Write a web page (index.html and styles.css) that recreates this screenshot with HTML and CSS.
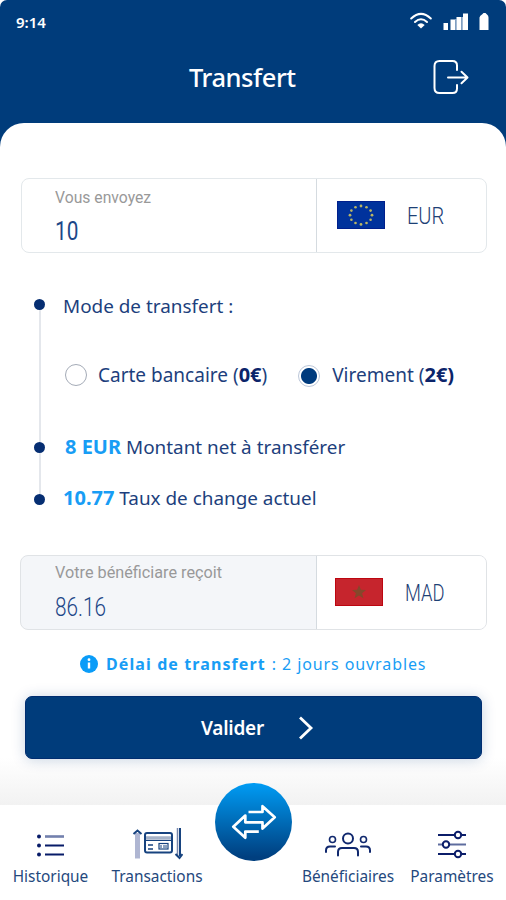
FILE: index.html
```html
<!DOCTYPE html>
<html lang="fr">
<head>
<meta charset="utf-8">
<title>Transfert</title>
<link rel="stylesheet" href="styles.css">
</head>
<body>
<div class="app">
  <header class="header">
    <div class="status">
      <span class="time">9:14</span>
      <svg class="status-icons" width="84" height="22" viewBox="0 0 84 22">
        <g fill="none" stroke="#fff" stroke-width="2" stroke-linecap="round">
          <path d="M2.200 8.500Q12 -.8 21.800 8.500"/><path d="M6 12Q12 6.400 18 12"/>
        </g>
        <path d="M8.300 15Q12 11.500 15.700 15L12 18.600Z" fill="#fff"/>
        <g fill="#fff"><path d="M34.500 13h4.500v7h-4.500zM41.500 9.500h4.500v10.500h-4.500zM47.500 7h4.800v13h-4.800zM54 3.500h5v16.500h-5z"/><path d="M73 4.500l1.500-1.500h2L78 4.500q1.500 1 1.500 3V20h-9V7.500q.5-2 2.500-3z"/></g>
        <path d="M47 9v11M53.200 7v13" stroke="#b5c8de" stroke-width="1.400"/>
      </svg>
    </div>
    <div class="titlebar">
      <h1>Transfert</h1>
      <svg class="logout" width="38" height="38" viewBox="0 0 38 38" fill="none" stroke="#fff" stroke-width="2" stroke-linecap="round" stroke-linejoin="round">
        <path d="M25 12V7.500Q25 3 20.500 3H7.500Q2.500 3 2.500 8v22q0 5 5 5h13Q25 35 25 30.500V27M16 19.500h19M29.500 13.800l6 5.700-6 5.700"/>
      </svg>
    </div>
  </header>
  <main class="sheet">
    <section class="field">
      <div class="amount"><span class="label label-send">Vous envoyez</span><span class="value">10</span></div>
      <div class="currency">
        <svg class="flag" width="48" height="28" viewBox="0 0 48 28">
          <rect width="48" height="28" fill="#00329c"/><rect x=".5" y=".5" width="47" height="27" fill="none" stroke="#001f8c"/>
          <g fill="#b9b565"><circle cx="24" cy="5" r="1.400"/><circle cx="29.500" cy="6.200" r="1.300"/><circle cx="33.600" cy="9.600" r="1.300"/><circle cx="35" cy="14.200" r="1.400"/><circle cx="33.600" cy="18.800" r="1.300"/><circle cx="29.500" cy="22" r="1.300"/><circle cx="24" cy="23.400" r="1.400"/><circle cx="18.500" cy="22" r="1.300"/><circle cx="14.400" cy="18.800" r="1.300"/><circle cx="13" cy="14.200" r="1.400"/><circle cx="14.400" cy="9.600" r="1.300"/><circle cx="18.500" cy="6.200" r="1.300"/></g>
        </svg>
        <span class="code">EUR</span>
      </div>
    </section>
    <ul class="steps">
      <li class="step step-mode"><i class="dot"></i><span>Mode de transfert :</span></li>
      <li class="modes">
        <label class="mode"><i class="radio"></i><span>Carte bancaire (<b>0€</b>)</span></label>
        <label class="mode mode-on"><i class="radio"></i><span>Virement (<b>2€)</b></span></label>
      </li>
      <li class="step step-net"><i class="dot"></i><span><b class="accent">8 EUR</b> Montant net à transférer</span></li>
      <li class="step step-rate"><i class="dot"></i><span><b class="accent">10.77</b> Taux de change actuel</span></li>
    </ul>
    <section class="field field-receive">
      <div class="amount"><span class="label label-receive">Votre bénéficiare reçoit</span><span class="value">86.16</span></div>
      <div class="currency">
        <svg class="flag" width="48" height="28" viewBox="0 0 48 28">
          <rect width="48" height="28" fill="#c6252d"/><rect x=".5" y=".5" width="47" height="27" fill="none" stroke="#bd0610"/>
          <path d="M24 7l1.900 4.700 5.100.3-3.900 3.300 1.300 5L24 17.600l-4.400 2.700 1.300-5L17 12l5.100-.3z" fill="#85472b"/>
        </svg>
        <span class="code code-mad">MAD</span>
      </div>
    </section>
    <p class="delay">
      <svg width="18" height="18" viewBox="0 0 18 18"><circle cx="9" cy="9" r="9" fill="#0a9cf8"/><path d="M9 7.500v6" stroke="#fff" stroke-width="2.400"/><circle cx="9" cy="4.700" r="1.400" fill="#fff"/></svg>
      <b>Délai de transfert</b><span>: 2 jours ouvrables</span>
    </p>
    <button class="submit"><span>Valider</span>
      <svg width="16" height="24" viewBox="0 0 16 24" fill="none" stroke="#fff" stroke-width="2.800"><path d="M2 1.500L13 12 2 22.500"/></svg>
    </button>
  </main>
  <nav class="nav">
    <a class="tab tab-history">
      <svg width="28" height="32" viewBox="0 0 28 32"><g fill="#071b68"><circle cx="2" cy="8.500" r="2"/><circle cx="2" cy="17.500" r="2"/><circle cx="2" cy="26.500" r="2"/></g><path d="M8 17.500h19M8 26.500h19" stroke="#071b68" stroke-width="2"/><path d="M8 8.500h19" stroke="#7280ad" stroke-width="2.600"/></svg>
      <span>Historique</span>
    </a>
    <a class="tab tab-trans">
      <svg width="52" height="32" viewBox="0 0 52 32" fill="none" stroke="#17437f">
        <path d="M6.500 30.500V5" stroke="#afb6d2" stroke-width="5"/><path d="M2.500 6L6.500 2.500l4 3.500" stroke-width="2"/>
        <rect x="14" y="5" width="27" height="19.500" rx="2" stroke-width="2"/><path d="M15 10h25" stroke="#a5b2c8" stroke-width="3.500"/><path d="M15 12.500h25" stroke-width="1"/>
        <path d="M17 17h5M17 21h5" stroke-width="1.500"/><rect x="28" y="15.500" width="9" height="5.500" stroke-width="1.200"/><path d="M30 17v3M33 17v3M35 17v3" stroke-width="1"/>
        <path d="M46.500 0v28" stroke="#7787ac" stroke-width="1.500"/><path d="M49 0v28M44.500 26l4 4 3-4" stroke-width="2"/>
      </svg>
      <span>Transactions</span>
    </a>
    <a class="fab">
      <svg width="46" height="38" viewBox="0 0 46 38" fill="none" stroke="#fff" stroke-width="2.700" stroke-linejoin="round">
        <path d="M17.500 9h14V3.200l12.200 11L31.500 25.500v-6.200H14.300V12.500L2.300 23.700l12 11V28.700h13.500"/>
      </svg>
    </a>
    <a class="tab tab-people">
      <svg width="46" height="32" viewBox="0 0 46 32" fill="none" stroke="#10286e" stroke-width="2" stroke-linecap="round">
        <circle cx="23" cy="10.500" r="5"/><circle cx="7.500" cy="11.500" r="3" stroke-width="1.600"/><circle cx="38.500" cy="11.500" r="3" stroke-width="1.600"/>
        <path d="M13 27.500V24q0-4 4-4h12q4 0 4 4v3.500M1 24v-1.500q0-4 4-4h5M45 24v-1.500q0-4-4-4h-5"/>
      </svg>
      <span>Bénéficiaires</span>
    </a>
    <a class="tab tab-settings">
      <svg width="28" height="32" viewBox="0 0 28 32" stroke="#0b1d69" stroke-width="2" fill="#fff"><path d="M0 7h28M0 26h28"/><path d="M0 16.500h28" stroke="#5e6c9e"/><circle cx="20" cy="7" r="3.200"/><circle cx="8" cy="16.500" r="3.200"/><circle cx="20" cy="26" r="3.200"/></svg>
      <span>Paramètres</span>
    </a>
  </nav>
</div>
</body>
</html>
```
FILE: styles.css
```css
* { box-sizing: border-box; }
body { margin: 0; background: #fff; font-family: "Noto Sans", sans-serif; color: #1d3f7d; }
h1, p, ul { margin: 0; padding: 0; }
ul { list-style: none; }
svg { display: block; flex: none; }
span, b { white-space: nowrap; }

.app { width: 506px; height: 900px; display: flex; flex-direction: column; overflow: hidden; }

.header { height: 148px; flex: none; background: #003c7b; border-radius: 7px 7px 0 0; color: #fff; }
.status { height: 44px; padding: 0 16px; display: flex; align-items: center; justify-content: space-between; }
.time { font-size: 15px; font-weight: 600; line-height: 20px; }
.status-icons { margin: -2px -3px 0 0; }
.titlebar { height: 66px; padding: 0 36px 0 189px; display: flex; align-items: center; justify-content: space-between; }
h1 { font-size: 25.5px; font-weight: 500; line-height: 34px; letter-spacing: -0.45px; }

.sheet { height: 682px; margin-top: -25px; flex: none; padding: 55px 19px 0 20px; background: linear-gradient(#fff 0, #fff 635px, #f2f2f2 682px); border-radius: 24px 24px 0 0; }

.field { display: flex; height: 75px; margin-left: 1px; border: 1.5px solid #e3e8eb; border-radius: 8px; background: #fff; overflow: hidden; }
.amount { width: 295px; padding: 7px 0 0 33px; border-right: 1px solid #d5dbe0; display: flex; flex-direction: column; align-items: flex-start; }
.label { font: 400 17px/22px Roboto, sans-serif; color: #999; transform-origin: 0 50%; }
.label-send { transform: scaleX(.925); }
.label-receive { transform: scaleX(.955); }
.value { margin-top: 9px; font: 400 25px/30px Roboto, sans-serif; color: #1d4788; transform: scaleX(.83); transform-origin: 0 50%; }
.currency { flex: 1; display: flex; align-items: center; padding-left: 20px; }
.flag { margin-top: -1px; }
.code { margin: 1px 0 0 22px; font: 300 23.5px/28px Roboto, sans-serif; color: #1d4075; transform: scaleX(.85); transform-origin: 0 50%; }
.code-mad { transform: scaleX(.78); }

.steps { position: relative; height: 302px; padding: 38px 0 0 14px; }
.steps::before { content: ""; position: absolute; left: 19px; top: 51px; width: 2px; height: 196px; background: #e4e7ec; }
.step { display: flex; align-items: center; height: 30px; font-size: 18.9px; line-height: 30px; }
.dot { position: relative; width: 11px; height: 11px; margin: -4px 18px 0 0; border-radius: 50%; background: #062e72; }
.modes { display: flex; height: 30px; margin: 39px 0 42px 31px; font-size: 19px; line-height: 30px; }
.mode { display: flex; align-items: center; }
.mode-on { margin-left: 31px; }
.radio { width: 22px; height: 22px; margin: 0 11px 0 0; border: 1.2px solid #a4abb7; border-radius: 50%; background: #fff; }
.mode-on .radio { margin: 2px 12px 0 0; border-color: #bcc7d9; background: radial-gradient(circle, #003b7d 7.5px, #fff 8.5px); }
b { font-weight: 700; }
.modes b { font-size: 20px; color: #0b246a; }
.step b { font-size: 20px; }
.step-net .dot { margin: 1px 20px 0 0; }
.step-rate { margin-top: 21px; }
.step-rate .dot { margin-top: 2px; }
.accent { color: #189df5; }

.field-receive { margin-left: 0; background: #f4f6f9; border-color: #e0e3e6; }
.field-receive .amount { width: 296px; padding: 5px 0 0 34px; }
.field-receive .value { margin-top: 10px; font-weight: 300; }
.field-receive .currency { background: #fff; padding-left: 18px; }

.delay { display: flex; align-items: center; height: 24px; margin-top: 22px; padding-left: 60px; font-size: 16px; line-height: 24px; color: #189df5; }
.delay b { margin-left: 8px; letter-spacing: 1.1px; }
.delay span { margin-left: 6px; letter-spacing: .9px; }

.submit { display: flex; align-items: center; width: 457px; height: 63px; margin: 20px 0 0 5px; padding: 0 0 0 175px; border: 1px solid #002d70; border-radius: 7px; background: #003c7b; box-shadow: 0 1px 14px rgba(0, 60, 123, .22); color: #fff; font: 600 19px/28px "Noto Sans", sans-serif; letter-spacing: -.25px; }
.submit svg { margin-left: 34px; }

.nav { position: relative; height: 95px; flex: none; padding-top: 23px; display: flex; background: #fff; }
.tab { display: flex; flex-direction: column; align-items: center; font-size: 15.4px; line-height: 22px; color: #24487d; }
.tab span { margin-top: 6px; }
.tab-history { width: 75px; margin-left: 13px; }
.tab-trans { width: 92px; margin-left: 23px; }
.tab-people { width: 94px; margin-left: 98px; }
.tab-settings { width: 84px; margin-left: 15px; }
.fab { position: absolute; left: 215px; top: -22px; width: 77px; height: 78px; border-radius: 50%; display: flex; align-items: center; justify-content: center; background: linear-gradient(#009cf4, #003f7f 95%); }
```
